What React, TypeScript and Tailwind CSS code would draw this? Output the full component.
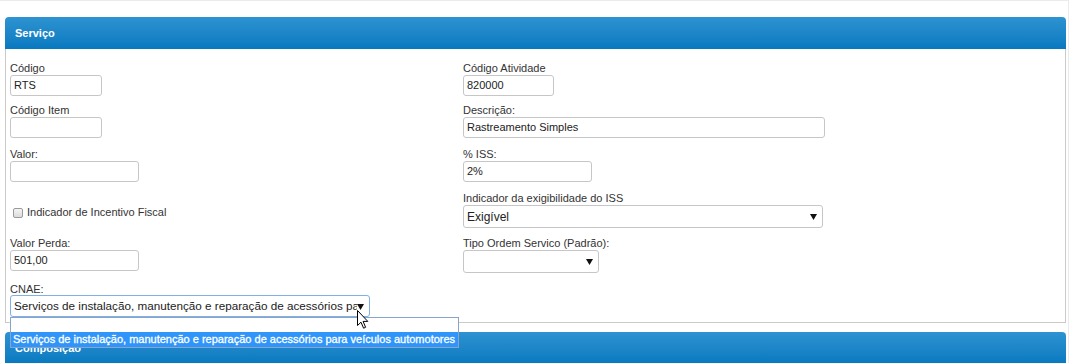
import React from "react";

const Label = ({ children, className = "" }: { children: React.ReactNode; className?: string }) => (
  <div className={"text-[11px] text-[#333] " + className}>{children}</div>
);

const Input = ({ value = "", className }: { value?: string; className: string }) => (
  <div
    className={
      "h-[21px] border border-[#c6c6c6] rounded-[3px] bg-white flex items-center px-[3px] text-[11px] text-[#222] " +
      className
    }
  >
    {value}
  </div>
);

const Arrow = () => (
  <svg width="7" height="7" viewBox="0 0 7 7" className="shrink-0">
    <polygon points="0,1 7,1 3.5,7" fill="#111" />
  </svg>
);

const Select = ({
  value = "",
  className,
  focused = false,
}: {
  value?: string;
  className: string;
  focused?: boolean;
}) => (
  <div
    className={
      "border rounded-[3px] bg-white flex items-center pl-[3px] pr-[5px] text-[#222] " +
      (focused ? "border-[#7fb0e6] " : "border-[#c6c6c6] ") +
      className
    }
  >
    <span className="flex-1 whitespace-nowrap overflow-hidden">{value}</span>
    <Arrow />
  </div>
);

export default function App() {
  return (
    <div className="w-[1069px] h-[363px] overflow-hidden bg-white border-t border-r border-[#ebebeb] font-['Liberation_Sans',Arial,sans-serif] pt-[16px] pl-[5px] pr-[2px]">
      {/* Serviço panel */}
      <div className="h-[32px] rounded-t-[4px] bg-linear-to-b from-[#2d93d1] to-[#0679c0] flex items-center pl-[10px] text-white font-bold text-[11px]">
        Serviço
      </div>
      <div className="border border-t-0 border-[#cacaca] pt-[13px] pb-[5px] pl-[4px] relative">
        <div className="grid grid-cols-[453px_1fr] grid-rows-[42px_44px_44px_45px_46px_auto]">
          <div>
            <Label className="leading-[13px]">Código</Label>
            <Input value="RTS" className="w-[92px]" />
          </div>
          <div>
            <Label className="leading-[13px]">Código Atividade</Label>
            <Input value="820000" className="w-[91px]" />
          </div>

          <div>
            <Label className="leading-[13px]">Código Item</Label>
            <Input className="w-[92px]" />
          </div>
          <div>
            <Label className="leading-[13px]">Descrição:</Label>
            <Input value="Rastreamento Simples" className="w-[362px]" />
          </div>

          <div>
            <Label className="leading-[13px]">Valor:</Label>
            <Input className="w-[129px]" />
          </div>
          <div>
            <Label className="leading-[13px]">% ISS:</Label>
            <Input value="2%" className="w-[129px]" />
          </div>

          <div className="pt-[14px] pl-[3px]">
            <div className="flex items-center h-[13px] gap-[4px] text-[11px] text-[#333]">
              <span className="w-[10px] h-[10px] rounded-[2px] border border-[#9a9a9a] bg-linear-to-b from-[#f4f4f4] to-[#dcdcdc]" />
              <span>Indicador de Incentivo Fiscal</span>
            </div>
          </div>
          <div>
            <Label className="leading-[13px]">Indicador da exigibilidade do ISS</Label>
            <Select value="Exigível" className="w-[360px] h-[23px] text-[12px]" />
          </div>

          <div>
            <Label className="leading-[13px]">Valor Perda:</Label>
            <Input value="501,00" className="w-[129px]" />
          </div>
          <div>
            <Label className="leading-[13px]">Tipo Ordem Servico (Padrão):</Label>
            <Select className="w-[136px] h-[23px] text-[12px]" />
          </div>

          <div>
            <Label className="leading-[12px]">CNAE:</Label>
            <div className="relative w-[360px]">
              <Select
                focused
                value="Serviços de instalação, manutenção e reparação de acessórios para veículos automotores"
                className="w-[360px] h-[22px] text-[11.7px]"
              />
              {/* open dropdown list */}
              <div className="absolute left-0 top-full w-[449px] h-[31px] border border-[#8aa4c8] bg-white z-10 flex flex-col">
                <div className="h-[14px]" />
                <div className="h-[15px] bg-[#2f95fb] text-white text-[11px] leading-[15px] pl-[2px] whitespace-nowrap [-webkit-text-stroke:0.3px_white]">
                  Serviços de instalação, manutenção e reparação de acessórios para veículos automotores
                </div>
              </div>
              {/* mouse cursor */}
              <svg
                width="12"
                height="19"
                viewBox="0 0 12 19"
                className="absolute left-[347px] top-[15px] z-20"
              >
                <path
                  d="M0.5 0.5 L0.5 15.5 L4 12.2 L6.6 18.2 L8.6 17.3 L6.1 11.4 L10.8 11.4 Z"
                  fill="white"
                  stroke="black"
                  strokeWidth="1"
                  strokeLinejoin="round"
                />
              </svg>
            </div>
          </div>
          <div />
        </div>
      </div>

      {/* Composição panel */}
      <div className="mt-[9px] h-[32px] rounded-t-[4px] bg-linear-to-b from-[#2d93d1] to-[#0679c0] flex items-center pl-[10px] text-white font-bold text-[11px]">
        Composição
      </div>
    </div>
  );
}
